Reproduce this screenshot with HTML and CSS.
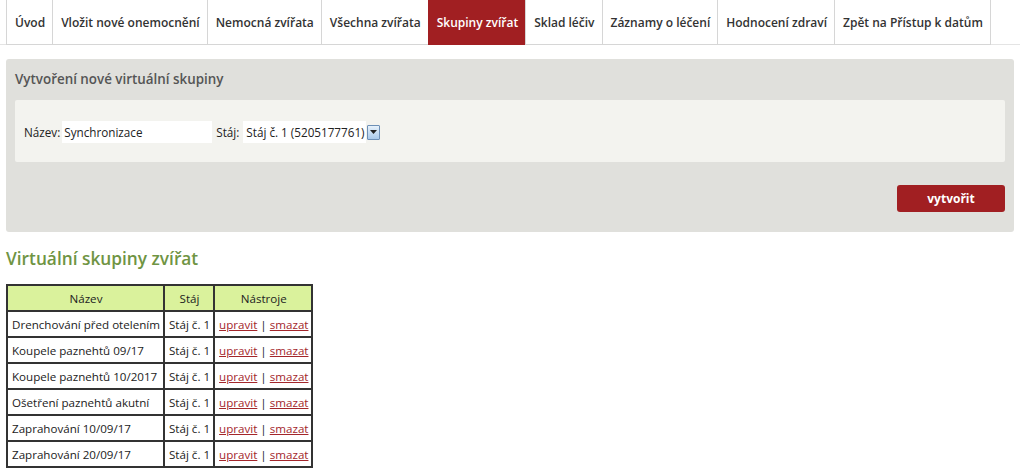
FILE: index.html
```html
<!DOCTYPE html>
<html lang="cs">
<head>
<meta charset="utf-8">
<title>Skupiny zvířat</title>
<link rel="stylesheet" href="styles.css">
</head>
<body>
<nav class="tabs">
  <a class="tab" href="#">Úvod</a>
  <a class="tab" href="#">Vložit nové onemocnění</a>
  <a class="tab" href="#">Nemocná zvířata</a>
  <a class="tab" href="#">Všechna zvířata</a>
  <a class="tab active" href="#">Skupiny zvířat</a>
  <a class="tab" href="#">Sklad léčiv</a>
  <a class="tab" href="#">Záznamy o léčení</a>
  <a class="tab" href="#">Hodnocení zdraví</a>
  <a class="tab" href="#">Zpět na Přístup k datům</a>
</nav>
<main class="content">
  <section class="panel">
    <h2 class="panel-title">Vytvoření nové virtuální skupiny</h2>
    <div class="form-box">
      <label class="lbl">Název:</label>
      <input class="txt" type="text" value="Synchronizace">
      <label class="lbl">Stáj:</label>
      <div class="select">
        <span class="select-text">Stáj č. 1 (5205177761)</span>
        <span class="select-btn"><svg width="7" height="4" viewBox="0 0 7 4"><path d="M0 0h7L3.5 4z" fill="#222"/></svg></span>
      </div>
    </div>
    <div class="actions">
      <button class="btn">vytvořit</button>
    </div>
  </section>
  <h1 class="heading">Virtuální skupiny zvířat</h1>
  <table class="grid">
    <thead>
      <tr><th>Název</th><th>Stáj</th><th>Nástroje</th></tr>
    </thead>
    <tbody>
      <tr><td>Drenchování před otelením</td><td>Stáj č. 1</td><td><a href="#">upravit</a> | <a href="#">smazat</a></td></tr>
      <tr><td>Koupele paznehtů 09/17</td><td>Stáj č. 1</td><td><a href="#">upravit</a> | <a href="#">smazat</a></td></tr>
      <tr><td>Koupele paznehtů 10/2017</td><td>Stáj č. 1</td><td><a href="#">upravit</a> | <a href="#">smazat</a></td></tr>
      <tr><td>Ošetření paznehtů akutní</td><td>Stáj č. 1</td><td><a href="#">upravit</a> | <a href="#">smazat</a></td></tr>
      <tr><td>Zaprahování 10/09/17</td><td>Stáj č. 1</td><td><a href="#">upravit</a> | <a href="#">smazat</a></td></tr>
      <tr><td>Zaprahování 20/09/17</td><td>Stáj č. 1</td><td><a href="#">upravit</a> | <a href="#">smazat</a></td></tr>
    </tbody>
  </table>
</main>
</body>
</html>
```
FILE: styles.css
```css
* { box-sizing: border-box; }
body {
  margin: 0;
  font-family: "Open Sans", "Noto Sans", sans-serif;
  font-size: 11.7px;
  color: #222;
  background: #fff;
}
.tabs {
  display: flex;
  padding-left: 6px;
  margin-right: 4px;
  border-bottom: 1px solid #e4e4e4;
  height: 45px;
}
.tab {
  flex: 0 0 auto;
  white-space: nowrap;
  display: flex;
  align-items: center;
  height: 45px;
  padding: 0 7px 0 8px;
  border: 1px solid #d6d6d6;
  border-top: none;
  border-right: none;
  font-weight: 600;
  font-size: 12px;
  color: #333;
  text-decoration: none;
  background: #fff;
}
.tab:last-child { border-right: 1px solid #d6d6d6; }
.tab.active {
  background: #a11f22;
  color: #fff;
  border-color: #a11f22;
}
.content {
  width: 1008px;
  margin: 14px 0 0 6px;
}
.panel {
  background: #e0e0dc;
  border-radius: 3px;
  padding: 10px 9px 20px 9px;
}
.panel-title {
  margin: 0 0 11px 0;
  font-size: 13.4px;
  font-weight: 600;
  color: #555;
  line-height: 20px;
}
.form-box {
  background: #f3f3ef;
  border-radius: 2px;
  height: 62px;
  display: flex;
  align-items: center;
  padding: 2px 9px 0 9px;
}
.lbl { margin-right: 2px; color: #222; }
.txt {
  width: 150px;
  height: 22px;
  border: none;
  background: #fff;
  font-family: inherit;
  font-size: 11.7px;
  padding: 0 2px;
  margin-right: 4px;
  color: #222;
}
.select {
  display: flex;
  align-items: center;
  margin-left: 2px;
}
.select-text {
  background: #fff;
  padding: 2px 1px 2px 3px;
  line-height: 18px;
}
.select-btn {
  width: 13px;
  height: 15px;
  margin-left: 1px;
  border: 1px solid #6d8fb6;
  background: linear-gradient(#e6f1fb, #a9c9ea);
  display: flex;
  align-items: center;
  justify-content: center;
  border-radius: 1px;
}
.actions {
  display: flex;
  justify-content: flex-end;
  margin-top: 23px;
}
.btn {
  width: 108px;
  height: 27px;
  border: none;
  border-radius: 3px;
  background: #a11f22;
  color: #fff;
  font-family: inherit;
  font-weight: 700;
  font-size: 12px;
}
.heading {
  margin: 14px 0 12px 0;
  font-size: 17.3px;
  font-weight: 600;
  color: #6f9443;
  line-height: 26px;
}
.grid {
  border-collapse: separate;
  border-spacing: 0;
  border: 1px solid #333;
}
.grid th, .grid td {
  border: 1px solid #333;
  padding: 0 3px 0 4px;
  height: 26px;
  font-size: 11.6px;
  white-space: nowrap;
}
.grid th {
  background: #daf29c;
  font-weight: 400;
  text-align: center;
  height: 26px;
}
.grid td { text-align: left; }
.grid a { color: #a3262b; }
```
